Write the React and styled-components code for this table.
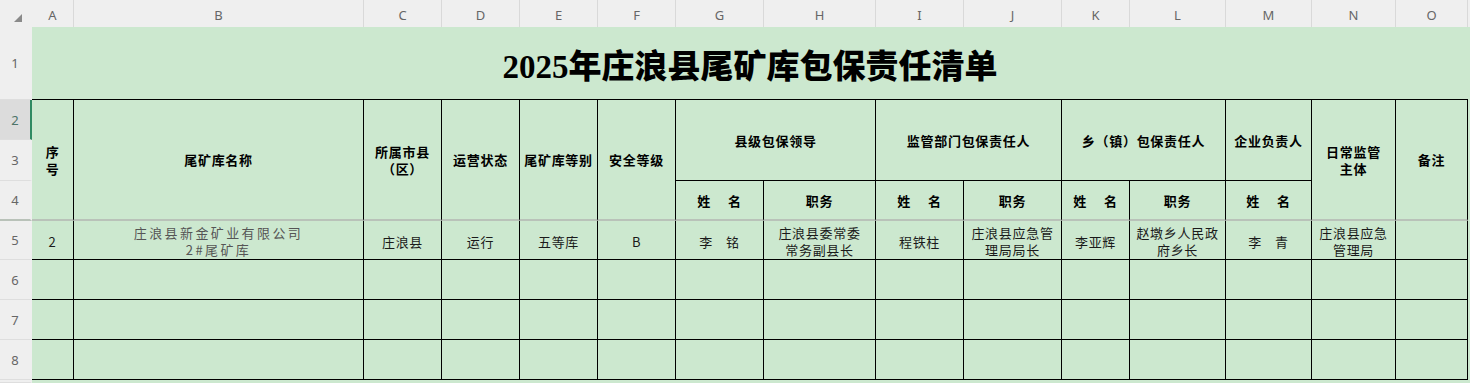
import React from "react";
import styled, { createGlobalStyle } from "styled-components";

const GlobalStyle = createGlobalStyle`
  html, body {
    margin: 0;
    padding: 0;
    overflow: hidden;
    background: #cce8cf;
  }
  body {
    font-family: "Noto Sans CJK SC", "Noto Sans", sans-serif;
  }
`;

// sheet geometry, taken from the screenshot
const COLS = [
  ["A", 42], ["B", 290], ["C", 78], ["D", 78], ["E", 78], ["F", 78],
  ["G", 88], ["H", 112], ["I", 88], ["J", 98], ["K", 68], ["L", 96],
  ["M", 86], ["N", 84], ["O", 72],
];
const ROWS = [73, 40, 41, 40, 39, 40, 40, 40];
const FREEZE_ROW = 4;

const Sheet = styled.div`
  display: grid;
  grid-template-columns: 32px ${COLS.map((c) => c[1] + "px").join(" ")} 1fr;
  grid-template-rows: 27px ${ROWS.map((r) => r + "px").join(" ")} 1fr;
  width: 100vw;
  height: 100vh;
  background: #cce8cf;
`;

const Corner = styled.div`
  grid-column: 1;
  grid-row: 1;
  background: #efefef;
  display: flex;
  align-items: flex-end;
  justify-content: center;
  padding: 0 0 5px 3px;
  box-sizing: border-box;
`;

const ColHead = styled.div`
  grid-row: 1;
  grid-column: ${(p) => p.$col};
  background: #efefef;
  border-right: 1px solid ${(p) => (p.$last ? "transparent" : "#d9d9d9")};
  box-sizing: border-box;
  display: flex;
  align-items: center;
  justify-content: center;
  padding-top: 3px;
  font-family: "Noto Sans", "Open Sans", sans-serif;
  font-size: 13px;
  color: #666;
`;

const RowHead = styled.div`
  grid-column: 1;
  grid-row: ${(p) => p.$row};
  background: ${(p) => (p.$active ? "#dcdcdc" : "#efefef")};
  border-bottom: ${(p) => (p.$freeze ? "2px solid #b9c2b9" : "1px solid #dedede")};
  border-right: 2px solid ${(p) => (p.$active ? "#2f8a62" : "transparent")};
  box-sizing: border-box;
  display: flex;
  align-items: center;
  justify-content: center;
  overflow: hidden;
  font-family: "Noto Sans", "Open Sans", sans-serif;
  font-size: 13px;
  color: ${(p) => (p.$active ? "#4d7468" : "#666")};
`;

const Cell = styled.div`
  grid-column: ${(p) => p.$col} / span ${(p) => p.$cs || 1};
  grid-row: ${(p) => p.$row} / span ${(p) => p.$rs || 1};
  box-sizing: border-box;
  display: flex;
  align-items: center;
  justify-content: center;
  text-align: center;
  background: #cce8cf;
  border-right: 1px solid #000;
  border-bottom: ${(p) => (p.$freeze ? "2px solid #b9c2b9" : "1px solid #000")};
  font-size: 13px;
  line-height: 17px;
  letter-spacing: 0.7px;
  color: #111;
  overflow: hidden;
`;

const HeadCell = styled(Cell)`
  font-weight: 700;
  color: #000;
`;

const DataCell = styled(Cell)`
  font-weight: 400;
  color: ${(p) => (p.$muted ? "#555" : "#1a1a1a")};
  letter-spacing: ${(p) => (p.$wide ? "2.4px" : "0.7px")};
  padding-top: 2px;
`;

const TitleCell = styled.div`
  grid-column: 2 / span ${COLS.length};
  grid-row: 2;
  border-bottom: 1px solid #000;
  display: flex;
  align-items: center;
  justify-content: center;
  padding-top: 1px;
  box-sizing: border-box;
  font-family: "Liberation Serif", "Noto Sans CJK SC", serif;
  font-weight: 900;
  font-size: 33px;
  color: #000;
`;

const Gap = styled.span`
  display: inline-block;
  width: ${(p) => p.$w}px;
`;

const Name = ({ a, b, w }) => (
  <>
    {a}
    <Gap $w={w} />
    {b}
  </>
);

// sheet row n -> grid row n + 1, column A -> grid column 2
const colIdx = (letter) => COLS.findIndex((c) => c[0] === letter) + 2;

const HEAD = [
  { c: "A", r: 2, rs: 3, t: <>序<br />号</> },
  { c: "B", r: 2, rs: 3, t: "尾矿库名称" },
  { c: "C", r: 2, rs: 3, t: <>所属市县<br />（区）</> },
  { c: "D", r: 2, rs: 3, t: "运营状态" },
  { c: "E", r: 2, rs: 3, t: "尾矿库等别" },
  { c: "F", r: 2, rs: 3, t: "安全等级" },
  { c: "G", cs: 2, r: 2, rs: 2, t: "县级包保领导" },
  { c: "I", cs: 2, r: 2, rs: 2, t: "监管部门包保责任人" },
  { c: "K", cs: 2, r: 2, rs: 2, t: "乡（镇）包保责任人" },
  { c: "M", r: 2, rs: 2, t: "企业负责人" },
  { c: "N", r: 2, rs: 3, t: <>日常监管<br />主体</> },
  { c: "O", r: 2, rs: 3, t: "备注" },
  { c: "G", r: 4, t: <Name a="姓" b="名" w={17} /> },
  { c: "H", r: 4, t: "职务" },
  { c: "I", r: 4, t: <Name a="姓" b="名" w={17} /> },
  { c: "J", r: 4, t: "职务" },
  { c: "K", r: 4, t: <Name a="姓" b="名" w={17} /> },
  { c: "L", r: 4, t: "职务" },
  { c: "M", r: 4, t: <Name a="姓" b="名" w={17} /> },
];

const RECORD = {
  A: "2",
  B: <>庄浪县新金矿业有限公司<br />2#尾矿库</>,
  C: "庄浪县",
  D: "运行",
  E: "五等库",
  F: "B",
  G: <Name a="李" b="铭" w={13} />,
  H: <>庄浪县委常委<br />常务副县长</>,
  I: "程铁柱",
  J: <>庄浪县应急管<br />理局局长</>,
  K: "李亚辉",
  L: <>赵墩乡人民政<br />府乡长</>,
  M: <Name a="李" b="青" w={13} />,
  N: <>庄浪县应急<br />管理局</>,
  O: "",
};

function CornerMark() {
  return (
    <svg width="8" height="8" viewBox="0 0 8 8">
      <polygon points="8,0 8,8 0,8" fill="#8a8a8a" />
    </svg>
  );
}

export default function App() {
  const rowNums = [1, 2, 3, 4, 5, 6, 7, 8, 9];
  return (
    <>
      <GlobalStyle />
      <Sheet>
        <Corner>
          <CornerMark />
        </Corner>
        {COLS.map(([letter], i) => (
          <ColHead key={letter} $col={i + 2}>
            {letter}
          </ColHead>
        ))}
        <ColHead $col={COLS.length + 2} $last />

        {rowNums.map((n) => (
          <RowHead
            key={n}
            $row={n + 1}
            $active={n === 2}
            $freeze={n === FREEZE_ROW}
          >
            {n < 9 ? n : ""}
          </RowHead>
        ))}

        <TitleCell>2025年庄浪县尾矿库包保责任清单</TitleCell>

        {HEAD.map((h) => (
          <HeadCell
            key={h.c + h.r}
            $col={colIdx(h.c)}
            $cs={h.cs}
            $row={h.r + 1}
            $rs={h.rs}
            $freeze={h.r + (h.rs || 1) - 1 === FREEZE_ROW}
          >
            {h.t}
          </HeadCell>
        ))}

        {COLS.map(([letter]) => (
          <DataCell
            key={"5" + letter}
            $col={colIdx(letter)}
            $row={6}
            $muted={letter === "B"}
            $wide={letter === "B"}
          >
            {RECORD[letter]}
          </DataCell>
        ))}

        {[6, 7, 8].map((r) =>
          COLS.map(([letter]) => (
            <DataCell key={r + letter} $col={colIdx(letter)} $row={r + 1} />
          ))
        )}
      </Sheet>
    </>
  );
}
